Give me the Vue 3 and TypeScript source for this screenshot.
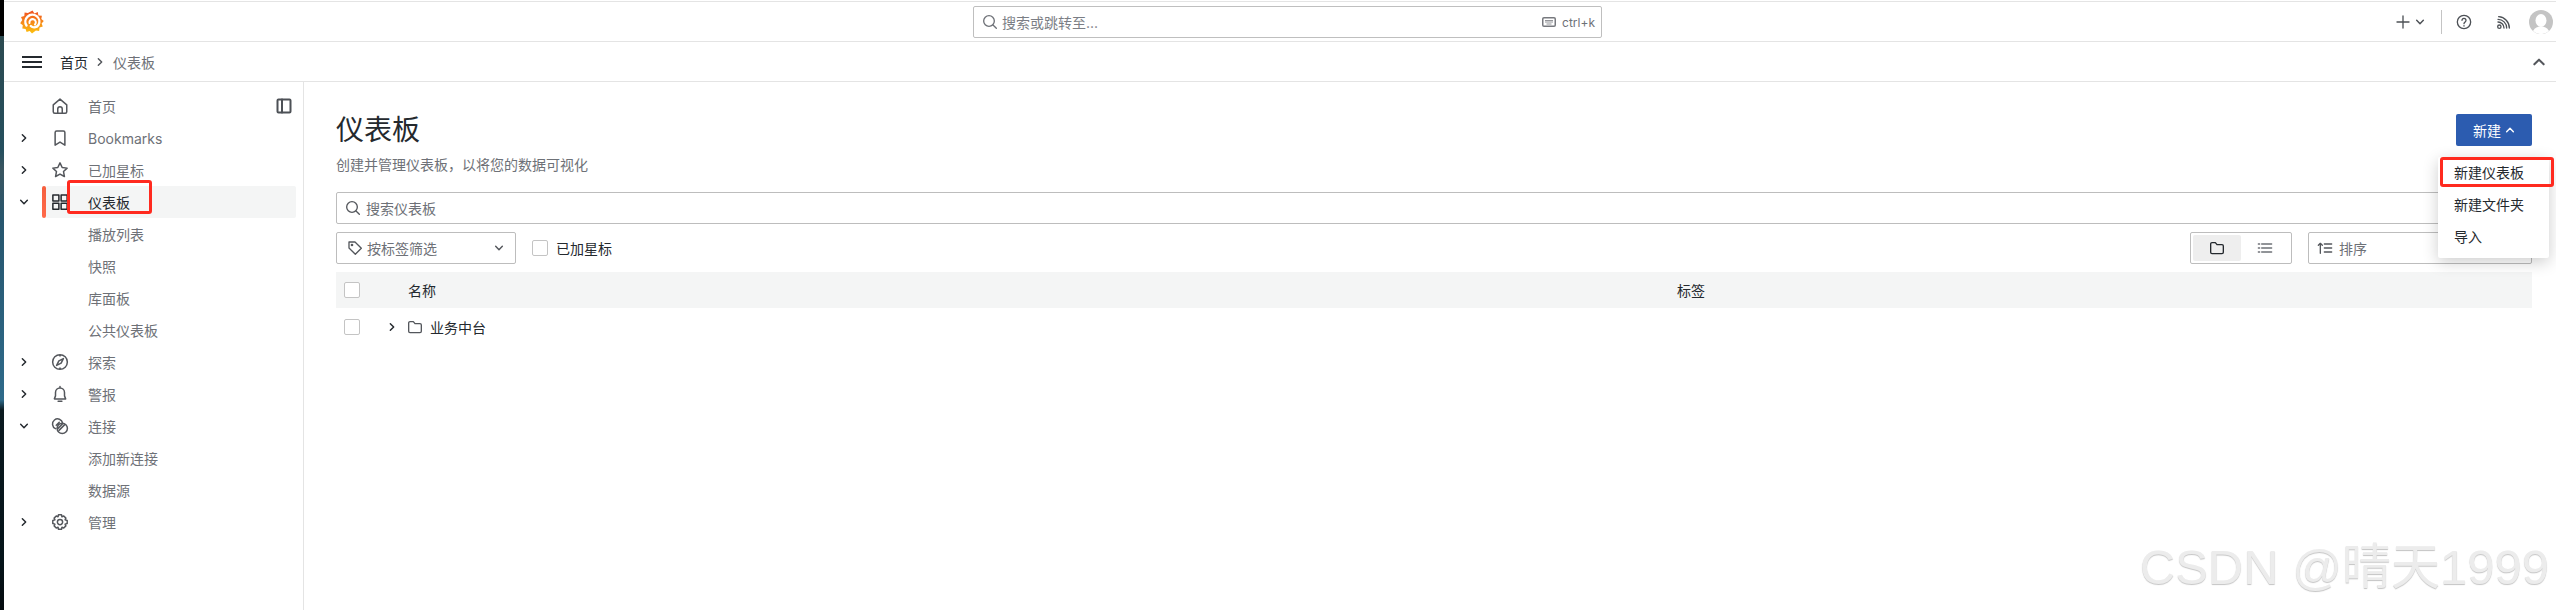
<script setup lang="ts">
interface NavItem {
  label: string
  icon?: string
  chevron?: 'right' | 'down'
  active?: boolean
  child?: boolean
}

const nav: NavItem[] = [
  { label: '首页', icon: 'home' },
  { label: 'Bookmarks', icon: 'bookmark', chevron: 'right' },
  { label: '已加星标', icon: 'star', chevron: 'right' },
  { label: '仪表板', icon: 'apps', chevron: 'down', active: true },
  { label: '播放列表', child: true },
  { label: '快照', child: true },
  { label: '库面板', child: true },
  { label: '公共仪表板', child: true },
  { label: '探索', icon: 'compass', chevron: 'right' },
  { label: '警报', icon: 'bell', chevron: 'right' },
  { label: '连接', icon: 'link', chevron: 'down' },
  { label: '添加新连接', child: true },
  { label: '数据源', child: true },
  { label: '管理', icon: 'cog', chevron: 'right' },
]

const iconPaths: Record<string, string> = {
  home: 'M3 10.500 12 2.800l9 7.700V19.500a2 2 0 0 1-2 2H5a2 2 0 0 1-2-2ZM9 21.500v-5.500a3 3 0 0 1 6 0v5.500',
  bookmark: 'M5.500 4.500a2 2 0 0 1 2-2h9a2 2 0 0 1 2 2V21.500l-6.500-4-6.500 4Z',
  star: 'M12 2.500l2.900 6.100 6.600.900-4.800 4.600 1.200 6.600L12 17.500l-5.900 3.200 1.200-6.600L2.500 9.500l6.600-.900Z',
  apps: 'M2.500 2.500h8v8h-8ZM13.500 2.500h8v8h-8ZM2.500 13.500h8v8h-8ZM13.500 13.500h8v8h-8Z',
  compass: 'M12 2.200a9.800 9.800 0 1 0 0 19.600 9.800 9.800 0 0 0 0-19.600ZM16.500 7.500l-3 6-6 3 3-6ZM12 2.200v1.800M12 20v1.800',
  bell: 'M12 4a6 6 0 0 0-6 6v4.500L4.500 18.500h15L18 14.500V10a6 6 0 0 0-6-6ZM12 2v2M9.500 21.500h5',
  link: 'M15.500 8a6.800 6.800 0 1 0-9.500 7.500M15 8.200a6.900 6.900 0 1 1-6.900 6.900A6.900 6.900 0 0 1 15 8.200ZM9 15.500 15.500 9M11 17.500l7-7M7 11l4-4',
  cog: 'M12 8.500a3.500 3.500 0 1 0 0 7 3.500 3.500 0 0 0 0-7ZM10 2.200h4l.600 2.800 2.400-1 2.800 2.800-1 2.400 2.800.800v4l-2.800.800 1 2.400-2.800 2.800-2.400-1-.600 2.800h-4l-.600-2.800-2.400 1-2.800-2.800 1-2.400-2.800-.800v-4l2.800-.800-1-2.400 2.800-2.800 2.400 1Z',
}
</script>

<template>
  <div class="page">
    <div class="wallpaper"></div>
    <div class="shell">
      <header class="topbar">
        <svg class="logo" viewBox="0 0 24 24" width="24" height="24">
          <defs>
            <linearGradient id="g" x1="0.500" y1="1" x2="0.500" y2="0">
              <stop offset="0" stop-color="#fcc20e" />
              <stop offset="1" stop-color="#f04e23" />
            </linearGradient>
          </defs>
          <path fill="url(#g)" d="M12.500 0.500l2 3 3.300-1.400.6 3.500 3.500.2-.6 3.300 2.500 2-2.200 2.500 1.200 3-3.200 1-.5 3.300-3.200-.5L12 23.500 9.700 21l-3.100 1-1-3-3.300-.6.500-3.200-2.600-2L2.300 10 1 6.900l3.300-1 .3-3.300 3.300.5Z" />
          <path fill="none" stroke="#fff" stroke-width="2.400" stroke-linecap="round" d="M6.500 15.500A7 7 0 1 1 18.500 15c-1.800 2.800-5.800 3-7.700 1" />
          <path fill="none" stroke="#fff" stroke-width="2" stroke-linecap="round" d="M9.500 13a3.200 3.200 0 1 1 5.500 1.500" />
        </svg>
        <div class="top-center">
          <div class="cmd">
            <svg class="ico" viewBox="0 0 24 24" width="16" height="16"><circle cx="10.500" cy="10.500" r="8" /><path d="m16.500 16.500 5 5" /></svg>
            <span class="cmd-text">搜索或跳转至...</span>
            <span class="kbd">
              <svg viewBox="0 0 14 10" width="14" height="10"><rect x="0" y="0" width="14" height="10" rx="2" fill="#77797e" /><rect x="1.500" y="1.500" width="11" height="7" rx="0.500" fill="#fff" /><path d="M3 3.500h8M3 5h8M4.500 7h5" stroke="#77797e" stroke-width="0.800" /></svg>
              ctrl+k
            </span>
          </div>
        </div>
        <div class="top-right">
          <svg class="ico plus" viewBox="0 0 24 24" width="16" height="16"><path d="M12 3v18M3 12h18" /></svg>
          <svg class="ico chev small-chev" viewBox="0 0 24 24" width="10" height="10"><path d="m4 8 8 8 8-8" /></svg>
          <span class="divider"></span>
          <svg class="ico help" viewBox="0 0 24 24" width="16" height="16"><circle cx="12" cy="12" r="10" /><path d="M9 9.500a3 3 0 1 1 4.500 2.600c-1 .600-1.500 1.100-1.500 2.400M12 17.500v.5" /></svg>
          <svg class="ico rss" viewBox="0 0 24 24" width="16" height="16"><circle cx="5" cy="19" r="2.500" /><path d="M3 12a9 9 0 0 1 9 9M3 8a13 13 0 0 1 13 13M4 4a17 17 0 0 1 16 17" /></svg>
          <span class="avatar">
            <svg viewBox="0 0 24 24" width="24" height="24"><circle cx="12" cy="12" r="12" fill="#c4c4c4" /><ellipse cx="12" cy="10.500" rx="5.500" ry="6.500" fill="#fff" /><path d="M4 21c2-3.500 4.500-4.500 8-4.500s6 1 8 4.500a12 12 0 0 1-16 0Z" fill="#fff" /></svg>
          </span>
        </div>
      </header>

      <div class="crumbbar">
        <svg class="burger" viewBox="0 0 20 12" width="20" height="12"><path d="M0 1h20M0 6h20M0 11h20" /></svg>
        <span class="crumb-home">首页</span>
        <svg class="ico chev crumb-sep" viewBox="0 0 24 24" width="10" height="10"><path d="m8 4 8 8-8 8" /></svg>
        <span class="crumb-cur">仪表板</span>
        <svg class="ico chev crumb-up" viewBox="0 0 24 24" width="14" height="14"><path d="m4 16 8-8 8 8" /></svg>
      </div>

      <div class="body">
        <aside class="sidebar">
          <svg class="ico dock" viewBox="0 0 16 16" width="16" height="16"><rect x="1.500" y="1.500" width="13" height="13" rx="1" /><path d="M6 1.500v13" /></svg>
          <div v-for="item in nav" :key="item.label" class="nav-row" :class="{ active: item.active }">
            <span class="nav-chev">
              <svg v-if="item.chevron === 'right'" class="ico chev" viewBox="0 0 24 24" width="10" height="10"><path d="m8 4 8 8-8 8" /></svg>
              <svg v-else-if="item.chevron === 'down'" class="ico chev" viewBox="0 0 24 24" width="10" height="10"><path d="m4 8 8 8 8-8" /></svg>
            </span>
            <span class="nav-inner">
              <span class="nav-icon">
                <svg v-if="item.icon" class="ico" viewBox="0 0 24 24" width="18" height="18"><path :d="iconPaths[item.icon]" /></svg>
              </span>
              <span class="nav-label" :class="{ child: item.child }">{{ item.label }}</span>
            </span>
          </div>
          <span class="mark mark-nav"></span>
        </aside>

        <main class="content">
          <div class="head">
            <div>
              <h1>仪表板</h1>
              <p>创建并管理仪表板，以将您的数据可视化</p>
            </div>
            <button class="new-btn">新建
              <svg class="ico chev" viewBox="0 0 24 24" width="10" height="10"><path d="m4 16 8-8 8 8" /></svg>
            </button>
          </div>

          <div class="field search">
            <svg class="ico" viewBox="0 0 24 24" width="16" height="16"><circle cx="10.500" cy="10.500" r="8" /><path d="m16.500 16.500 5 5" /></svg>
            <span class="ph">搜索仪表板</span>
          </div>

          <div class="filters">
            <div class="field tagsel">
              <svg class="ico" viewBox="0 0 24 24" width="16" height="16"><path d="M3 3h9l9.500 9.500-9 9L3 12Z" /><circle cx="7.500" cy="7.500" r="1" /></svg>
              <span class="ph">按标签筛选</span>
              <svg class="ico chev tag-chev" viewBox="0 0 24 24" width="10" height="10"><path d="m4 8 8 8 8-8" /></svg>
            </div>
            <span class="cb"></span>
            <span class="starred">已加星标</span>
            <div class="spacer"></div>
            <div class="toggle">
              <span class="tg on">
                <svg class="ico" viewBox="0 0 24 24" width="16" height="16"><path d="M2.500 6a2 2 0 0 1 2-2h5l2.500 3h7.500a2 2 0 0 1 2 2v9.500a2 2 0 0 1-2 2h-15a2 2 0 0 1-2-2Z" /></svg>
              </span>
              <span class="tg">
                <svg class="ico" viewBox="0 0 24 24" width="16" height="16"><path d="M7 6h15M7 12h15M7 18h15M2 6h2M2 12h2M2 18h2" /></svg>
              </span>
            </div>
            <div class="field sortsel">
              <svg class="ico" viewBox="0 0 24 24" width="16" height="16"><path d="M5 20V5M2 8l3-3 3 3M11 6h11M11 12h11M11 18h11" /></svg>
              <span class="ph">排序</span>
            </div>
          </div>

          <div class="table-head">
            <span class="cb"></span>
            <span class="th-name">名称</span>
            <span class="th-tags">标签</span>
          </div>
          <div class="row">
            <span class="cb"></span>
            <svg class="ico chev row-chev" viewBox="0 0 24 24" width="10" height="10"><path d="m8 4 8 8-8 8" /></svg>
            <svg class="ico row-folder" viewBox="0 0 24 24" width="16" height="16"><path d="M2.500 6a2 2 0 0 1 2-2h5l2.500 3h7.500a2 2 0 0 1 2 2v9.500a2 2 0 0 1-2 2h-15a2 2 0 0 1-2-2Z" /></svg>
            <span class="row-name">业务中台</span>
          </div>

          <div class="menu">
            <div class="menu-item">新建仪表板</div>
            <div class="menu-item">新建文件夹</div>
            <div class="menu-item">导入</div>
            <span class="mark mark-menu"></span>
          </div>
        </main>
      </div>
    </div>
    <div class="watermark">CSDN @晴天1999</div>
  </div>
</template>

<style>
html, body { margin: 0; background: #fff; }
</style>

<style scoped>
.page {
  position: relative;
  display: flex;
  width: 2556px;
  height: 610px;
  overflow: hidden;
  font-family: Inter, "Noto Sans CJK SC", sans-serif;
  font-size: 14px;
  color: #24292e;
}
.wallpaper {
  width: 4px;
  flex: none;
  background: linear-gradient(#000 0 36px, #2c4a50 36px, #254f5e 150px, #3a5560 170px, #27566e 220px, #2e6a8a 400px, #0b1a20 410px, #05141a 560px, #040b0f 100%);
}
.shell { flex: 1; min-width: 0; display: flex; flex-direction: column; }
.ico { fill: none; stroke: currentColor; stroke-width: 2; stroke-linecap: round; stroke-linejoin: round; flex: none; }
.chev { stroke-width: 3.500; }
.topbar {
  height: 39px;
  margin-top: 1px;
  border-top: 1px solid #e4e4e4;
  border-bottom: 1px solid #e4e4e4;
  display: flex;
  align-items: center;
  position: relative;
}
.logo { margin-left: 16px; }
.top-center { position: absolute; left: 969px; top: 4px; }
.cmd {
  width: 629px;
  height: 32px;
  box-sizing: border-box;
  border: 1px solid #bfbfbf;
  border-radius: 2px;
  display: flex;
  align-items: center;
  padding: 0 6px 0 8px;
  color: #6e7177;
}
.cmd-text { margin-left: 4px; font-size: 14px; color: #7b7e85; }
.kbd { margin-left: auto; display: flex; align-items: center; gap: 6px; font-size: 12px; color: #6e7177; }
.top-right { margin-left: auto; display: flex; align-items: center; color: #4d5156; }
.plus { margin-right: 4px; }
.small-chev { margin-right: 16px; }
.divider { width: 1px; height: 24px; background: #c4c4c4; margin-right: 14px; }
.help { margin-right: 24px; }
.rss { margin-right: 17px; }
.avatar { display: flex; margin-right: 3px; }
.crumbbar {
  height: 39px;
  border-bottom: 1px solid #e4e4e4;
  display: flex;
  align-items: center;
}
.burger { margin-left: 18px; stroke: #24292e; stroke-width: 2; fill: none; flex: none; }
.crumb-home { margin-left: 18px; color: #24292e; }
.crumb-sep { margin: 0 8px 0 7px; color: #54575c; }
.crumb-cur { color: #6e7177; }
.crumb-up { margin-left: auto; margin-right: 10px; color: #54575c; }
.body { flex: 1; display: flex; min-height: 0; }
.sidebar {
  width: 300px;
  flex: none;
  box-sizing: border-box;
  border-right: 1px solid #e4e4e4;
  padding-top: 8px;
  position: relative;
}
.dock { position: absolute; left: 272px; top: 16px; color: #4d5156; }
.nav-row { height: 32px; display: flex; align-items: center; }
.nav-chev { width: 16px; margin-left: 15px; display: flex; color: #24292e; flex: none; }
.nav-inner { display: flex; align-items: center; margin-left: 11px; flex: 1; height: 32px; margin-right: 7px; border-radius: 2px; position: relative; }
.nav-icon { width: 18px; height: 18px; margin-left: 5px; display: flex; color: #54575c; flex: none; }
.nav-label { margin-left: 19px; color: #6e7177; }
.nav-row.active .nav-inner { background: #f4f5f5; }
.nav-row.active .nav-inner::before {
  content: "";
  position: absolute;
  left: -4px;
  top: 0;
  bottom: 0;
  width: 4px;
  border-radius: 2px;
  background: linear-gradient(#f55f3e, #ff6a4a);
}
.nav-row.active .nav-label { color: #24292e; }
.nav-row.active .nav-icon { color: #24292e; }
.mark {
  position: absolute;
  border: 3px solid #ff2a1f;
  border-radius: 3px;
  box-sizing: border-box;
  pointer-events: none;
}
.mark-nav { left: 63px; top: 98px; width: 85px; height: 34px; }
.content { flex: 1; min-width: 0; position: relative; padding: 0 24px 0 32px; box-sizing: border-box; }
.head { display: flex; justify-content: space-between; padding-top: 32px; height: 110px; box-sizing: border-box; }
h1 { margin: -2px 0 0; font-size: 28px; font-weight: 400; line-height: 36px; color: #24292e; }
p { margin: 7px 0 0; font-size: 14px; line-height: 20px; color: #6e7177; }
.new-btn {
  width: 76px;
  height: 32px;
  border: 0;
  border-radius: 2px;
  background: #2c5cb0;
  color: #fff;
  font: inherit;
  display: flex;
  align-items: center;
  justify-content: center;
  gap: 4px;
}
.field {
  height: 32px;
  box-sizing: border-box;
  border: 1px solid #bdbdbd;
  border-radius: 2px;
  background: #fff;
  display: flex;
  align-items: center;
  color: #54575c;
}
.search { padding-left: 8px; }
.ph { margin-left: 4px; color: #6e7177; }
.search .ph { margin-left: 5px; }
.filters { display: flex; align-items: center; height: 32px; margin-top: 8px; }
.tagsel { width: 180px; padding: 0 11px 0 10px; }
.tag-chev { margin-left: auto; }
.cb {
  width: 16px;
  height: 16px;
  box-sizing: border-box;
  border: 1px solid #c4c4c4;
  border-radius: 2px;
  background: #fff;
  flex: none;
}
.filters .cb { margin-left: 16px; }
.starred { margin-left: 8px; color: #24292e; }
.spacer { flex: 1; }
.toggle {
  width: 102px;
  height: 32px;
  box-sizing: border-box;
  border: 1px solid #bdbdbd;
  border-radius: 2px;
  display: flex;
  align-items: center;
  padding: 2px;
}
.tg { width: 48px; height: 26px; display: flex; align-items: center; justify-content: center; color: #6e7177; border-radius: 2px; }
.tg.on { background: #eeeeee; color: #24292e; }
.sortsel { width: 224px; margin-left: 16px; padding-left: 8px; }
.sortsel .ph { margin-left: 6px; }
.table-head {
  height: 36px;
  margin-top: 8px;
  background: #f4f5f5;
  display: flex;
  align-items: center;
  padding-left: 8px;
  color: #24292e;
}
.th-name { margin-left: 48px; }
.th-tags { position: absolute; left: 1373px; }
.row { height: 37px; display: flex; align-items: center; padding-left: 8px; color: #24292e; }
.row-chev { margin-left: 27px; }
.row-folder { margin-left: 10px; color: #54575c; }
.row-name { margin-left: 7px; }
.menu {
  position: absolute;
  left: 2134px;
  top: 75px;
  width: 111px;
  padding-bottom: 5px;
  background: #fff;
  border-radius: 2px;
  box-shadow: 0 4px 16px rgba(0, 0, 0, 0.2);
}
.menu-item { height: 32px; line-height: 32px; padding-left: 16px; color: #24292e; }
.mark-menu { left: 2px; top: 0; width: 114px; height: 30px; }
.watermark {
  position: absolute;
  right: 7px;
  top: 538px;
  font-family: "Liberation Sans", "Noto Sans CJK SC", sans-serif;
  font-size: 49px;
  line-height: 58px;
  color: #ececec;
  text-shadow: 0 1px 1px #c4c4c4;
  white-space: nowrap;
}
</style>
